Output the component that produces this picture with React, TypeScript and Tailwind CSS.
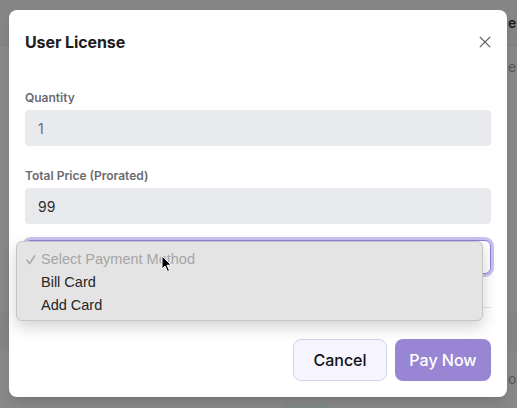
import React from "react";

const font = { fontFamily: "Inter, 'Noto Sans', sans-serif" };
const sysFont = { fontFamily: "'Liberation Sans', Arial, sans-serif" };

const Field = ({ label, value, dark }: { label: string; value: string; dark?: boolean }) => (
  <div className="flex flex-col gap-1">
    <label className="text-[12px] leading-4 font-semibold text-[#6b6b72]">{label}</label>
    <div
      className={`h-[36px] rounded-[4px] bg-[#e8eaed] px-[13px] flex items-center text-[14px] ${
        dark ? "text-[#2d2d2d]" : "text-[#6b6e74]"
      }`}
    >
      {value}
    </div>
  </div>
);

const Cursor = () => (
  <svg width="12" height="18" viewBox="0 0 12 18" className="absolute left-[161px] top-[255px]">
    <path
      d="M1 1 L1 14 L4 11 L6.5 16.5 L8.5 15.5 L6 10.2 L10.2 10.2 Z"
      fill="#000"
      stroke="#fff"
      strokeWidth="1"
      strokeLinejoin="round"
    />
  </svg>
);

export default function App() {
  return (
    <div className="relative w-[517px] h-[408px] overflow-hidden bg-[#898989]" style={font}>
      {/* page behind the dialog */}
      <div className="flex flex-col h-full text-[14px]">
        <div className="h-[46px] bg-[#858585] border-b border-[#7e7e7e] flex items-center pl-[508px] whitespace-nowrap font-semibold text-[#1e1e1e]">
          e l
        </div>
        <div className="h-[40px] flex items-center pl-[508px] whitespace-nowrap text-[#555]">er</div>
        <div className="h-[227px]" />
        <div className="h-[38px] bg-[#858585]" />
        <div className="flex-1 flex flex-col">
          <div className="mt-[18px] h-5 leading-5 pl-[508px] whitespace-nowrap text-[#555]">ou</div>
          <div className="mt-auto ml-[283px] w-[46px] h-[4px] rounded-t-md bg-[#7f8a84]" />
        </div>
      </div>

      {/* dialog */}
      <div className="absolute left-[9px] top-[10px] w-[498px] h-[387px] rounded-[8px] bg-white shadow-lg flex flex-col px-4 pt-5 pb-4">
        <div className="flex items-center justify-between h-6">
          <h2 className="text-[16px] font-bold text-[#1c1c1e] tracking-[-0.1px]">User License</h2>
          <svg width="12" height="12" viewBox="0 0 12 12">
            <path d="M0.8 0.8 L11.2 11.2 M11.2 0.8 L0.8 11.2" stroke="#5a5a5a" strokeWidth="1.2" />
          </svg>
        </div>

        <div className="mt-[36px] flex flex-col gap-[22px]">
          <Field label="Quantity" value="1" />
          <Field label="Total Price (Prorated)" value="99" dark />
        </div>

        <div className="mt-[16px] h-[34px] rounded-[6px] border border-[#8f80d8] bg-white ring-[3px] ring-[#cbc2f0]" />

        <div className="mt-[33px] border-t border-[#e6e6e6] pt-[31px] flex justify-end gap-2">
          <button className="w-[94px] h-[42px] rounded-[8px] border border-[#d8d4e8] bg-[#f6f4ff] text-[16px] font-medium text-[#111]">
            Cancel
          </button>
          <button className="w-[96px] h-[42px] rounded-[8px] bg-[#9886d4] text-[16px] font-medium text-white">
            Pay Now
          </button>
        </div>
      </div>

      {/* native select popup */}
      <div
        className="absolute left-[16px] top-[241px] w-[467px] h-[80px] rounded-[6px] border border-[#c6c6c6] bg-[#e4e4e4] shadow-[0_6px_16px_rgba(0,0,0,0.18)] flex flex-col pt-[6px] text-[14.5px]"
        style={sysFont}
      >
        <div className="h-[23px] flex items-center pl-[9px] text-[#a6a6a6]">
          <svg width="15" height="10" viewBox="0 0 15 10" className="shrink-0">
            <path d="M1 5.2 L3.6 8.6 L8.6 1" fill="none" stroke="#a6a6a6" strokeWidth="1.5" strokeLinecap="round" strokeLinejoin="round" />
          </svg>
          <span>Select Payment Method</span>
        </div>
        <div className="h-[23px] flex items-center pl-[24px] text-[#262626]">Bill Card</div>
        <div className="h-[23px] flex items-center pl-[24px] text-[#262626]">Add Card</div>
      </div>

      <Cursor />
    </div>
  );
}
